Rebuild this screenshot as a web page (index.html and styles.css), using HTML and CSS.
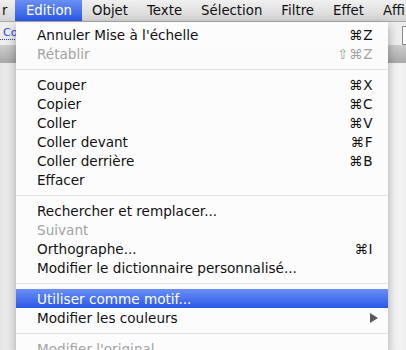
FILE: index.html
```html
<!DOCTYPE html>
<html lang="fr">
<head>
    <meta charset="UTF-8">
    <title>Edition</title>
    <link rel="stylesheet" href="styles.css">
</head>
<body>

    <!-- Menu bar -->
    <div class="menubar">
        <span class="mb-item first">r</span>
        <span class="mb-item open">Edition</span>
        <span class="mb-item">Objet</span>
        <span class="mb-item">Texte</span>
        <span class="mb-item">Sélection</span>
        <span class="mb-item">Filtre</span>
        <span class="mb-item">Effet</span>
        <span class="mb-item">Affi</span>
    </div>

    <!-- Window behind the menu -->
    <div class="workspace">
        <div class="toolbar">
            <a class="link">Co</a>
            <span class="field"></span>
        </div>
        <div class="band"></div>
        <div class="canvas"></div>
    </div>

    <!-- Edition menu -->
    <div class="menu">
        <div class="item"><span>Annuler Mise à l'échelle</span><span class="key">⌘Z</span></div>
        <div class="item off"><span>Rétablir</span><span class="key">⇧⌘Z</span></div>
        <div class="sep"></div>
        <div class="item"><span>Couper</span><span class="key">⌘X</span></div>
        <div class="item"><span>Copier</span><span class="key">⌘C</span></div>
        <div class="item"><span>Coller</span><span class="key">⌘V</span></div>
        <div class="item"><span>Coller devant</span><span class="key">⌘F</span></div>
        <div class="item"><span>Coller derrière</span><span class="key">⌘B</span></div>
        <div class="item"><span>Effacer</span></div>
        <div class="sep"></div>
        <div class="item"><span>Rechercher et remplacer...</span></div>
        <div class="item off"><span>Suivant</span></div>
        <div class="item"><span>Orthographe...</span><span class="key">⌘I</span></div>
        <div class="item"><span>Modifier le dictionnaire personnalisé...</span></div>
        <div class="sep"></div>
        <div class="item active"><span>Utiliser comme motif...</span></div>
        <div class="item sub"><span>Modifier les couleurs</span><span class="arrow"></span></div>
        <div class="sep"></div>
        <div class="item off"><span>Modifier l'original</span></div>
    </div>

</body>
</html>
```

FILE: styles.css
```css
/* General */
body {
    margin: 0;
    padding: 0;
    width: 406px;
    height: 350px;
    overflow: hidden;
    position: relative;
    font-family: "DejaVu Sans", sans-serif;
    font-size: 13.3px;
    color: #111;
    display: flex;
    flex-direction: column;
}

/* Menu bar */
.menubar {
    display: flex;
    height: 21px;
    background: linear-gradient(to bottom, #f0f0f0, #d4d4d4);
    border-bottom: 1px solid #a9a9a9;
    white-space: nowrap;
    overflow: hidden;
    flex-shrink: 0;
}

.mb-item {
    display: flex;
    align-items: center;
    padding: 0 9.5px;
    color: #111;
}

.mb-item.first {
    padding: 0 8px 0 2px;
}

.mb-item.open {
    padding: 0 10.5px;
    background: linear-gradient(to bottom, #6a8ff5, #2a58e9);
    color: white;
}

/* Window behind */
.workspace {
    flex: 1;
    display: flex;
    flex-direction: column;
}

.toolbar {
    height: 23px;
    background: #eeeeee;
    display: flex;
    align-items: center;
    justify-content: space-between;
    overflow: hidden;
}

.link {
    font-size: 11px;
    color: #2b3ee0;
    padding-left: 3px;
    border-bottom: 1px dotted #2b3ee0;
    line-height: 12px;
}

.field {
    width: 20px;
    height: 17px;
    margin-right: -18px;
    margin-top: 3px;
    background: white;
    border: 1px solid #8a8a8a;
}

.band {
    height: 18px;
    background: linear-gradient(to bottom, #cdcdcd, #a9a9a9);
}

.canvas {
    flex: 1;
    background: linear-gradient(to right, #e6e6e6, #f7f7f7 6%, #ffffff 90%, #f0f0f0);
}

/* Dropdown menu */
.menu {
    position: absolute;
    top: 22px;
    left: 16px;
    width: 372px;
    height: 328px;
    overflow: hidden;
    padding-top: 3px;
    font-size: 13.6px;
    background: rgba(252, 252, 252, 0.98);
    box-shadow: 0 4px 10px rgba(0, 0, 0, 0.35);
}

.item {
    height: 19px;
    display: flex;
    align-items: center;
    justify-content: space-between;
    padding: 0 15px 0 21px;
    white-space: nowrap;
}

.item.off {
    color: #a3a3a3;
}

.item.active {
    background: linear-gradient(to bottom, #6a8ff5, #2a58e9);
    color: white;
}

.item.sub {
    padding-right: 10px;
}

.key {
    letter-spacing: 0.5px;
}

.arrow {
    width: 0;
    height: 0;
    border-top: 5px solid transparent;
    border-bottom: 5px solid transparent;
    border-left: 8px solid #5a5a5a;
}

.sep {
    height: 12px;
    display: flex;
    align-items: center;
}

.sep::after {
    content: "";
    flex: 1;
    height: 1px;
    background: #e2e2e2;
}
```
